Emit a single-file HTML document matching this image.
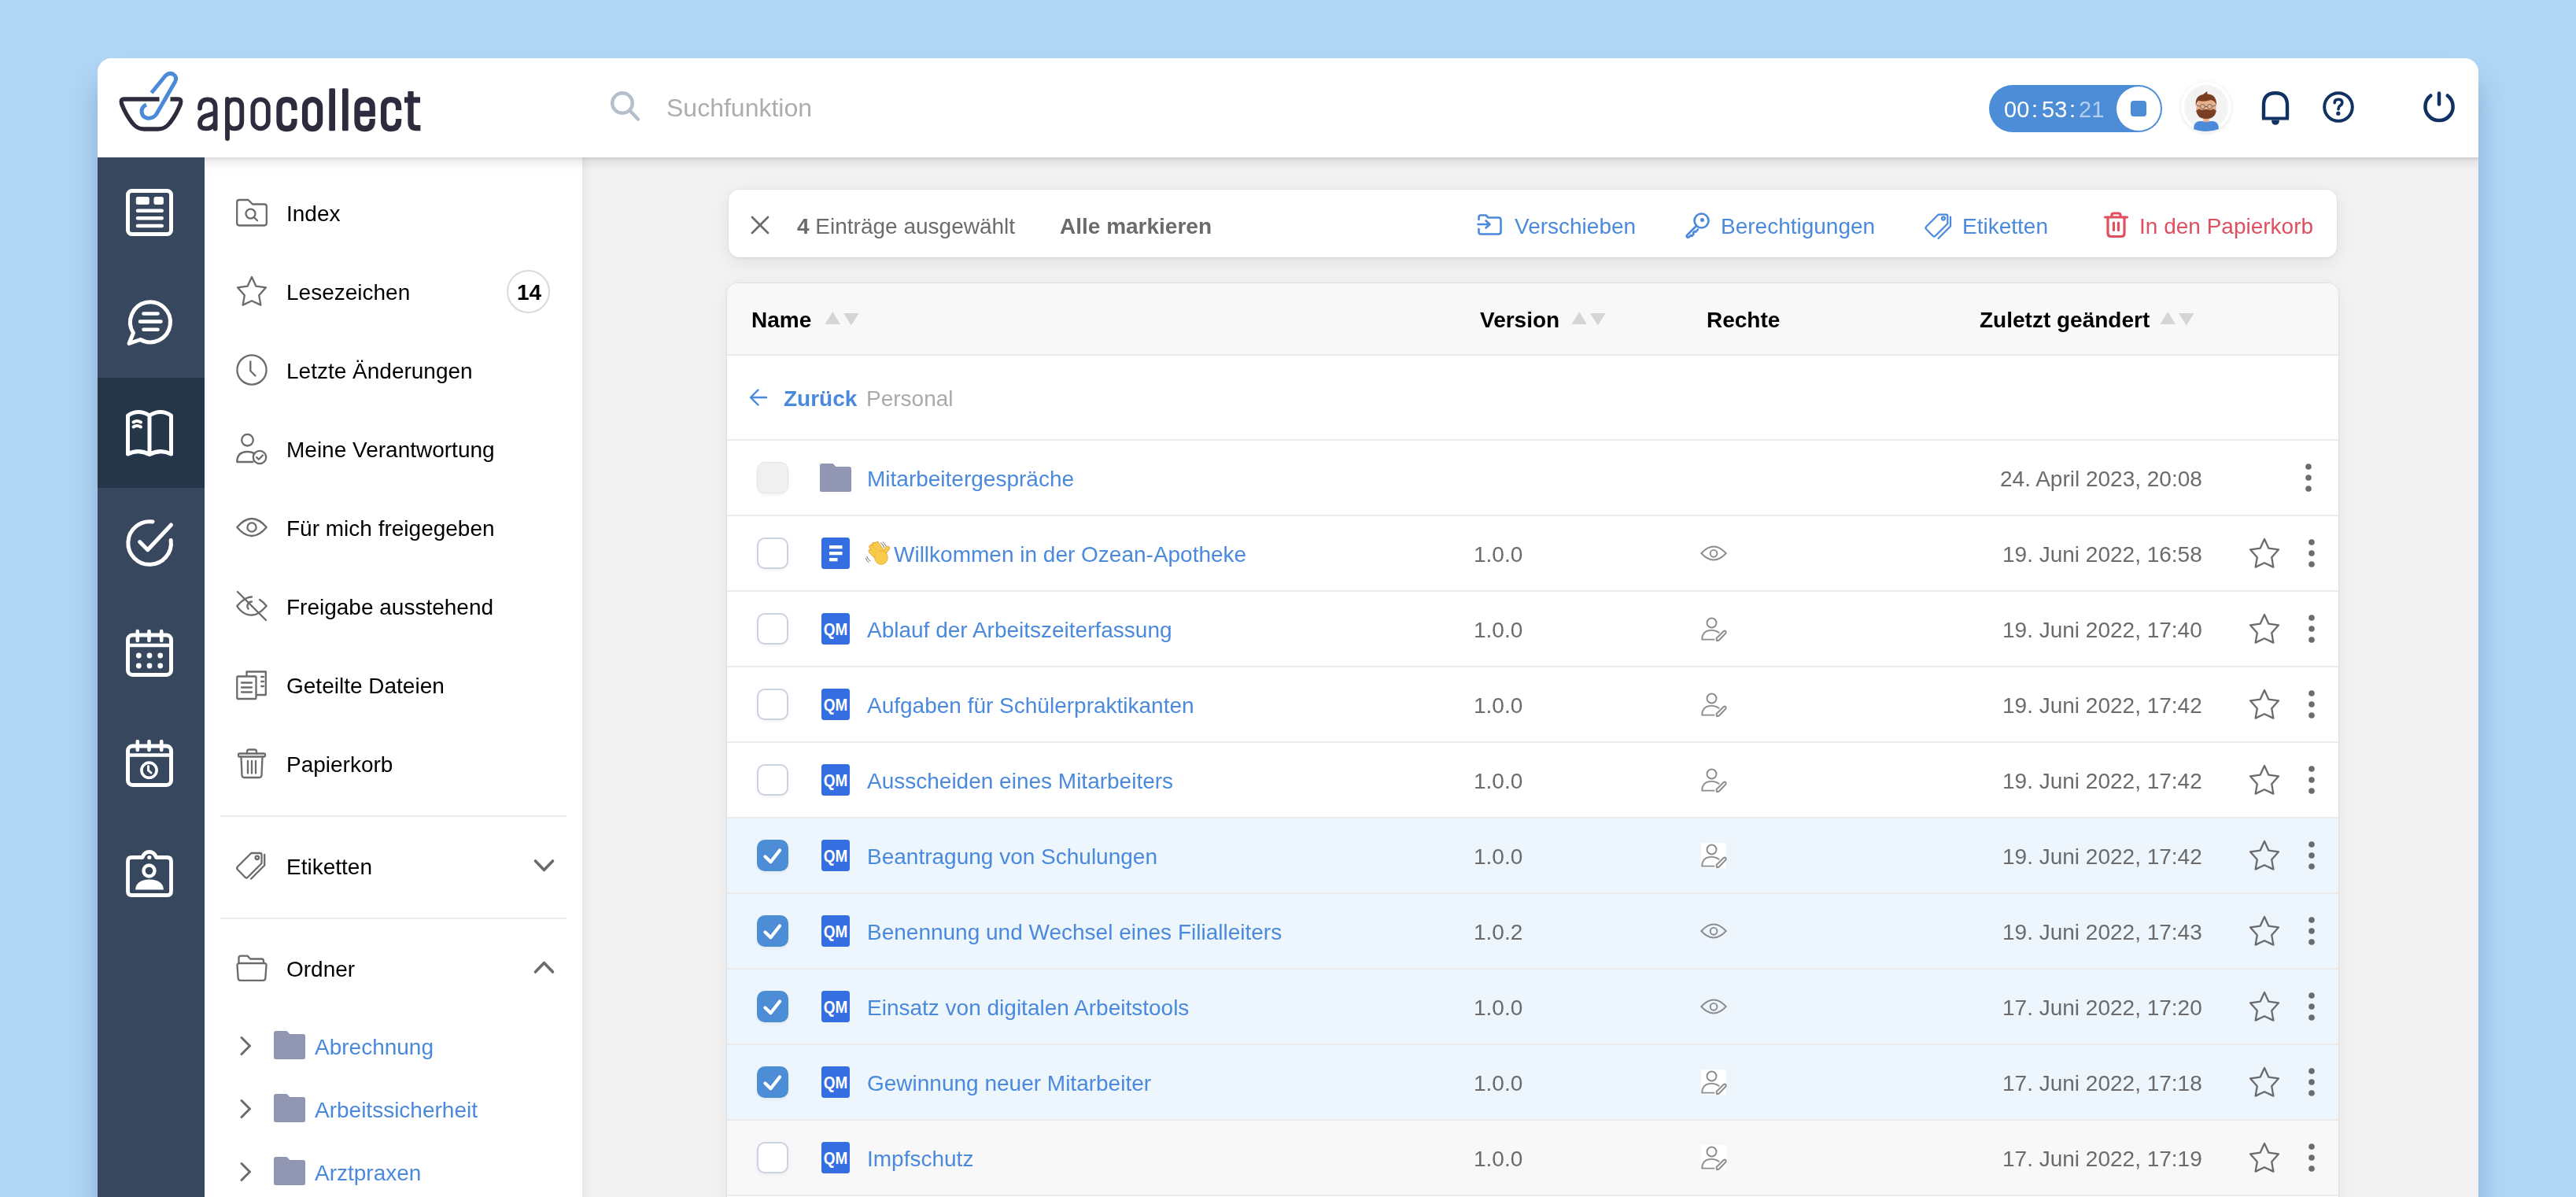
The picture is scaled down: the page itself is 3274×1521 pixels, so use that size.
<!DOCTYPE html><html><head><meta charset="utf-8"><style>
*{box-sizing:border-box}
html,body{margin:0;padding:0}
body{width:3274px;height:1521px;overflow:hidden;background:#b1d5f5;position:relative;font-family:"Liberation Sans", sans-serif}
.a{position:absolute}
.t{position:absolute;line-height:1;white-space:nowrap;will-change:transform}
.i{position:absolute;overflow:visible}
</style></head><body>
<div class="a" style="left:124px;top:74px;width:3026px;height:1600px;background:#f2f2f2;border-radius:18px 18px 0 0;box-shadow:0 30px 32px rgba(40,80,130,.30)"></div>
<div class="a" style="left:124px;top:200px;width:136px;height:1400px;background:#37485e"></div>
<div class="a" style="left:124px;top:480px;width:136px;height:140px;background:#263649"></div>
<div class="a" style="left:260px;top:200px;width:480px;height:1400px;background:#fff"></div>
<div class="a" style="left:740px;top:200px;width:12px;height:1400px;background:linear-gradient(90deg,rgba(0,0,0,.045),rgba(0,0,0,.02) 50%,rgba(0,0,0,0))"></div>
<div class="a" style="left:124px;top:74px;width:3026px;height:126px;background:#fff;border-radius:18px 18px 0 0"></div>
<div class="a" style="left:260px;top:200px;width:2890px;height:20px;background:linear-gradient(180deg,rgba(0,0,0,.14),rgba(0,0,0,.06) 25%,rgba(0,0,0,.015) 65%,rgba(0,0,0,0))"></div>
<svg class="i" style="left:0px;top:0px;" width="600" height="200" viewBox="0 0 600 200">
<path d="M202.5 126 H158 Q152.6 126 154.6 132 Q160 146 168 156 Q174 164 183 164 H201 Q210 164 216 156 Q224 146 229.4 132 Q231.4 126 226 126 H216.5" fill="none" stroke="#2d2b3d" stroke-width="5.3" stroke-linejoin="round" stroke-linecap="butt"/>
<path d="M192.5 118 L210 96.5 Q215 91.5 220.5 94.5 Q225.5 98 222.5 104 L198.5 145.5 Q194 151 187 150 Q180 148.5 180 141 Q180.5 135.5 186 133" fill="none" stroke="#4a8ad8" stroke-width="5" stroke-linecap="butt" stroke-linejoin="round"/>
<g fill="none" stroke="#2d2b3d" stroke-width="5.8" stroke-linecap="butt">
<path d="M254 137.5 Q254 126.4 263.8 126.4 Q273.6 126.4 273.6 137 V163.5" stroke-linecap="round"/>
<path d="M273.6 143.5 L261 147.5 Q254 150.5 254 157 Q254 163.4 262 163.4 Q270 163.4 273.6 156"/>
<path d="M289 126 V176" stroke-linecap="round"/>
<path d="M289 134 Q291 126.4 298 126.4 Q307.3 126.4 307.3 136 V154 Q307.3 163.4 298 163.4 Q291 163.4 289 156"/>
<rect x="321.4" y="126.4" width="19.4" height="37" rx="9.7"/>
</g>
<g fill="none" stroke="#2d2b3d" stroke-width="7.3" stroke-linecap="butt">
<path d="M374 140 V136.5 Q374 126.6 364.5 126.6 Q355 126.6 355 136.5 V153.5 Q355 163.5 364.5 163.5 Q374 163.5 374 153.5 V151"/>
<rect x="387.6" y="126.6" width="19" height="37" rx="9.5"/>
<path d="M454 144.5 H473.2 V136.5 Q473.2 126.6 463.6 126.6 Q454 126.6 454 136.5 V153.5 Q454 163.5 463.6 163.5 Q473.2 163.5 473.2 153.5 V151"/>
<path d="M506.6 140 V136.5 Q506.6 126.6 497 126.6 Q487.6 126.6 487.6 136.5 V153.5 Q487.6 163.5 497 163.5 Q506.6 163.5 506.6 153.5 V151"/>
<path d="M522 116 V155 Q522 162.6 529 162.6 H534.4"/>
<path d="M514 127 H534"/>
</g>
<rect x="418.3" y="112.3" width="7.7" height="54" rx="1.5" fill="#2d2b3d"/>
<rect x="435" y="112.3" width="7.7" height="54" rx="1.5" fill="#2d2b3d"/>
</svg>
<svg class="i" style="left:760px;top:100px;" width="70" height="70" viewBox="0 0 70 70"><circle cx="31" cy="31" r="12.8" fill="none" stroke="#b5bfcc" stroke-width="4.4"/><path d="M40.5 40.5 L51 51.5" stroke="#b5bfcc" stroke-width="4.4" stroke-linecap="round"/></svg>
<div class="t" style="left:847px;top:121.2px;font-size:32px;color:#adadad;font-weight:400;">Suchfunktion</div>
<div class="a" style="left:2528px;top:108px;width:220px;height:60px;border-radius:30px;background:#4d8dd7"></div>
<div class="a" style="left:2689px;top:109px;width:58px;height:58px;border-radius:50%;background:#fff;border:1.5px solid #4d8dd7"></div>
<div class="a" style="left:2708px;top:128px;width:20px;height:20px;border-radius:4px;background:#4d8dd7"></div>
<div class="t" style="left:2546.5px;top:124.9px;font-size:29px;color:#fff;font-weight:400;">00</div>
<div class="t" style="left:2582px;top:124.9px;font-size:29px;color:#fff;font-weight:400;">:</div>
<div class="t" style="left:2595px;top:124.9px;font-size:29px;color:#fff;font-weight:400;">53</div>
<div class="t" style="left:2630px;top:124.9px;font-size:29px;color:#fff;font-weight:400;">:</div>
<div class="t" style="left:2642px;top:124.9px;font-size:29px;color:#b3cff0;font-weight:400;">21</div>
<div class="a" style="left:2772px;top:104px;width:64px;height:64px;border-radius:50%;background:#f3f3f3;border:4px solid #fff;box-shadow:0 1px 4px rgba(0,0,0,.12)"></div>
<svg class="i" style="left:2772px;top:104px;" width="64" height="64" viewBox="0 0 64 64">
<path d="M16 60 Q16 51 23 50 L41 50 Q48 51 48 60 Q32 66 16 60Z" fill="#4a8ad8"/>
<rect x="28.5" y="42" width="7" height="9" fill="#eab089"/>
<ellipse cx="32" cy="33" rx="12.5" ry="14" fill="#eab089"/>
<path d="M19 33 Q19 47 32 47 Q45 47 45 33 L45 38 Q42 32 38 36 Q32 34 26 36 Q22 32 19 38Z" fill="#7a3e22"/>
<path d="M19 31 Q17 18 28 16 L33 12 L33.5 15.5 Q46 16 45 31 Q44 24 38 23 Q30 26 22 24 Q19 27 19 31Z" fill="#7a3e22"/>
<circle cx="27.5" cy="31.5" r="3" fill="none" stroke="#666" stroke-width="1"/><circle cx="36.5" cy="31.5" r="3" fill="none" stroke="#666" stroke-width="1"/>
<path d="M30.5 31.5 H33.5 M20 30 L24.5 31 M44 30 L39.5 31" stroke="#666" stroke-width="1"/>
</svg>
<svg class="i" style="left:2860px;top:100px;" width="60" height="70" viewBox="0 0 60 70"><path d="M17 50.5 V33.5 Q17 18.2 32 18.2 Q47 18.2 47 33.5 V50.5" fill="none" stroke="#0f3263" stroke-width="4.4"/><path d="M15 50.5 H49" stroke="#0f3263" stroke-width="4"/><path d="M27 52.5 Q27 58.7 32 58.7 Q37 58.7 37 52.5Z" fill="#0f3263"/></svg>
<svg class="i" style="left:2940px;top:100px;" width="64" height="70" viewBox="0 0 64 70"><circle cx="32" cy="36" r="17.8" fill="none" stroke="#0f3263" stroke-width="4"/><path d="M27.2 30.8 Q27.2 26.2 32 26.2 Q36.8 26.2 36.8 30.3 Q36.8 33 33.6 34.8 Q32 35.8 32 38.8" fill="none" stroke="#0f3263" stroke-width="3.6" stroke-linecap="round"/><circle cx="31.8" cy="44.2" r="2.6" fill="#0f3263"/></svg>
<svg class="i" style="left:3070px;top:100px;" width="64" height="70" viewBox="0 0 64 70"><path d="M19.3 21.5 A17.6 17.6 0 1 0 40.7 21.5" fill="none" stroke="#0f3263" stroke-width="4.5" stroke-linecap="round"/><path d="M30 18.6 V32.6" stroke="#0f3263" stroke-width="4.5" stroke-linecap="round"/></svg>
<svg class="i" style="left:160px;top:240px;" width="60" height="60" viewBox="0 0 60 60"><rect x="2.5" y="2.5" width="55" height="55" rx="5" fill="none" stroke="#fff" stroke-width="5"/>
<rect x="12.8" y="10" width="17" height="10" rx="2.5" fill="#fff"/><rect x="35.5" y="10" width="12.4" height="10" rx="2.5" fill="#fff"/>
<path d="M15 27.8 H45.7 M15 37.3 H45.7 M15 47 H45.7" stroke="#fff" stroke-width="4.6" stroke-linecap="round"/></svg>
<svg class="i" style="left:160px;top:380px;" width="60" height="60" viewBox="0 0 60 60"><path d="M9.5 43 A25.5 25.5 0 1 1 18.5 51.5 L4 56.5 Z" fill="none" stroke="#fff" stroke-width="5" stroke-linejoin="round"/>
<path d="M22.5 18.5 H40.5 M18 28.6 H44.5 M22.5 38.7 H40.5" stroke="#fff" stroke-width="4.6" stroke-linecap="round"/></svg>
<svg class="i" style="left:160px;top:520px;" width="60" height="60" viewBox="0 0 60 60"><path d="M2.5 8 Q16 -1 30 8 Q44 -1 57.5 8 V57 Q44 50 30 57.5 Q16 50 2.5 57 Z M30 8 V57.5" fill="none" stroke="#fff" stroke-width="5" stroke-linejoin="round"/>
<path d="M9.5 16.5 Q14 13.5 19 16.5 M9.5 22.5 Q14 19.5 19 22.5" fill="none" stroke="#fff" stroke-width="4" stroke-linecap="round"/></svg>
<svg class="i" style="left:160px;top:660px;" width="60" height="60" viewBox="0 0 60 60"><path d="M34 3 A27.3 27.3 0 1 0 57.2 26.5" fill="none" stroke="#fff" stroke-width="5" stroke-linecap="round"/>
<path d="M17.6 28.6 L27.7 38.7 L57.5 7" fill="none" stroke="#fff" stroke-width="5" stroke-linecap="round" stroke-linejoin="round"/></svg>
<svg class="i" style="left:160px;top:800px;" width="60" height="60" viewBox="0 0 60 60"><rect x="2.5" y="7" width="55" height="50.5" rx="6" fill="none" stroke="#fff" stroke-width="5"/>
<path d="M2.5 20 H57.5" stroke="#fff" stroke-width="4.5"/>
<path d="M14.8 2 V14 M29.5 2 V14 M45.2 2 V14" stroke="#fff" stroke-width="4.6" stroke-linecap="round"/>
<g fill="#fff"><circle cx="16.3" cy="33" r="3.4"/><circle cx="30" cy="33" r="3.4"/><circle cx="43.7" cy="33" r="3.4"/><circle cx="16.3" cy="46" r="3.4"/><circle cx="30" cy="46" r="3.4"/><circle cx="43.7" cy="46" r="3.4"/></g></svg>
<svg class="i" style="left:160px;top:940px;" width="60" height="60" viewBox="0 0 60 60"><rect x="2.5" y="8" width="55" height="49.5" rx="6" fill="none" stroke="#fff" stroke-width="5"/>
<path d="M2.5 19.5 H57.5" stroke="#fff" stroke-width="4.5"/>
<path d="M14.8 2 V13 M29.5 2 V13 M45.2 2 V13" stroke="#fff" stroke-width="4.6" stroke-linecap="round"/>
<circle cx="29.5" cy="38.7" r="9.6" fill="none" stroke="#fff" stroke-width="3.6"/><path d="M28.5 33.5 V38.8 L32 42" fill="none" stroke="#fff" stroke-width="3" stroke-linecap="round"/></svg>
<svg class="i" style="left:160px;top:1080px;" width="60" height="60" viewBox="0 0 60 60"><path d="M21 9.5 H7.5 Q2.5 9.5 2.5 14.5 V52.5 Q2.5 57.5 7.5 57.5 H52.5 Q57.5 57.5 57.5 52.5 V14.5 Q57.5 9.5 52.5 9.5 H38.5 Q36 2.5 29.8 2.5 Q23.5 2.5 21 9.5 Z" fill="none" stroke="#fff" stroke-width="4.8" stroke-linejoin="round"/>
<circle cx="29.8" cy="9.5" r="2.6" fill="#fff"/>
<circle cx="29.5" cy="26.5" r="7" fill="none" stroke="#fff" stroke-width="4.4"/>
<path d="M12 50.5 Q13 38 30 37.6 Q47 38 48 50.5 Z" fill="#fff"/></svg>
<svg class="i" style="left:300px;top:250px;" width="40" height="40" viewBox="0 0 40 40"><g fill="none" stroke="#6b6b6b" stroke-width="2.3" stroke-linecap="round" stroke-linejoin="round"><path d="M1.2 7 Q1.2 4 4.2 4 H15.5 L21 9.5 H36 Q38.8 9.5 38.8 12.3 V33.6 Q38.8 36.5 36 36.5 H4 Q1.2 36.5 1.2 33.6 Z"/><circle cx="18.5" cy="21.6" r="6"/><path d="M22.8 26 L27 30.2"/></g></svg>
<svg class="i" style="left:300px;top:350px;" width="40" height="40" viewBox="0 0 40 40"><g fill="none" stroke="#6b6b6b" stroke-width="2.3" stroke-linecap="round" stroke-linejoin="round"><path d="M20 2 L25.3 13.6 L38 15.3 L29.2 25.3 L31.4 37.6 L20 32.2 L8.6 37.6 L10.8 25.3 L2 15.3 L14.7 13.6 Z"/></g></svg>
<svg class="i" style="left:300px;top:450px;" width="40" height="40" viewBox="0 0 40 40"><g fill="none" stroke="#6b6b6b" stroke-width="2.3" stroke-linecap="round" stroke-linejoin="round"><circle cx="20" cy="20" r="18.6"/><path d="M18.3 9.5 V21.2 L24.5 27.5"/></g></svg>
<svg class="i" style="left:300px;top:550px;" width="40" height="40" viewBox="0 0 40 40"><g fill="none" stroke="#6b6b6b" stroke-width="2.3" stroke-linecap="round" stroke-linejoin="round"><circle cx="14.5" cy="9.2" r="7.3"/><path d="M1.3 37 Q1.3 24 14.5 24 Q20 24 23.5 26.5 M1.3 37 H21.5"/><circle cx="30" cy="31" r="8.2"/><path d="M26 31 L28.8 33.8 L34 28.5"/></g></svg>
<svg class="i" style="left:300px;top:650px;" width="40" height="40" viewBox="0 0 40 40"><g fill="none" stroke="#6b6b6b" stroke-width="2.3" stroke-linecap="round" stroke-linejoin="round"><path d="M1.3 20 Q20 -2 38.7 20 Q20 42 1.3 20 Z"/><circle cx="20" cy="20" r="5.6"/></g></svg>
<svg class="i" style="left:300px;top:750px;" width="40" height="40" viewBox="0 0 40 40"><g fill="none" stroke="#6b6b6b" stroke-width="2.3" stroke-linecap="round" stroke-linejoin="round"><path d="M5 25 Q2.5 22.5 1.3 20 Q12 8 20 8.5 M30 12 Q35 15 38.7 20 Q28 32 20 31.5 Q12 32 5 25"/><path d="M20 14.5 A5.6 5.6 0 0 0 15.6 23.5"/><path d="M2 2 L38 38"/></g></svg>
<svg class="i" style="left:300px;top:850px;" width="40" height="40" viewBox="0 0 40 40"><g fill="none" stroke="#6b6b6b" stroke-width="2.3" stroke-linecap="round" stroke-linejoin="round"><path d="M13.5 8.5 V3.5 H37.8 V33 H26"/><path d="M32.2 10 H35 M32.2 16 H35 M32.2 22 H35"/><rect x="1.3" y="9.5" width="24.2" height="28.5" rx="1"/><path d="M7 17.5 H20 M7 23.5 H20 M7 29.5 H20"/></g></svg>
<svg class="i" style="left:300px;top:950px;" width="40" height="40" viewBox="0 0 40 40"><g fill="none" stroke="#6b6b6b" stroke-width="2.3" stroke-linecap="round" stroke-linejoin="round"><path d="M4 7.5 H36 Q37 7.5 37 9 V10 Q37 11.5 36 11.5 H4 Q3 11.5 3 10 V9 Q3 7.5 4 7.5Z"/><path d="M14 7.5 V5 Q14 2.5 16.5 2.5 H23.5 Q26 2.5 26 5 V7.5"/><path d="M6.5 11.5 L7.5 35 Q7.7 38 10.5 38 H29.5 Q32.3 38 32.5 35 L33.5 11.5"/><path d="M15 17 V32.5 M20 17 V32.5 M25 17 V32.5"/></g></svg>
<div class="t" style="left:364px;top:258.3px;font-size:28px;color:#000;font-weight:400;">Index</div>
<div class="t" style="left:364px;top:358.3px;font-size:28px;color:#000;font-weight:400;">Lesezeichen</div>
<div class="t" style="left:364px;top:458.3px;font-size:28px;color:#000;font-weight:400;">Letzte Änderungen</div>
<div class="t" style="left:364px;top:558.3px;font-size:28px;color:#000;font-weight:400;">Meine Verantwortung</div>
<div class="t" style="left:364px;top:658.3px;font-size:28px;color:#000;font-weight:400;">Für mich freigegeben</div>
<div class="t" style="left:364px;top:758.3px;font-size:28px;color:#000;font-weight:400;">Freigabe ausstehend</div>
<div class="t" style="left:364px;top:858.3px;font-size:28px;color:#000;font-weight:400;">Geteilte Dateien</div>
<div class="t" style="left:364px;top:958.3px;font-size:28px;color:#000;font-weight:400;">Papierkorb</div>
<div class="a" style="left:644px;top:342.5px;width:55px;height:55px;border-radius:50%;border:2px solid #dadada;background:#fff"></div>
<div class="t" style="left:656.5px;top:358.3px;font-size:28px;color:#000;font-weight:700;">14</div>
<div class="a" style="left:280px;top:1036px;width:440px;height:2px;background:#ebebeb"></div>
<div class="a" style="left:280px;top:1166px;width:440px;height:2px;background:#ebebeb"></div>
<svg class="i" style="left:300px;top:1080px;" width="40" height="40" viewBox="0 0 40 40"><g fill="none" stroke="#6b6b6b" stroke-width="2.3" stroke-linecap="round" stroke-linejoin="round"><path d="M2 21.3 L19.3 4 H30.5 Q32.5 4 32.5 6 V17 L14.8 34.7 Q13.2 36.3 11.6 34.7 L2 25 Q0.3 23 2 21.3 Z"/><circle cx="26.8" cy="9.8" r="2.2"/><path d="M36.2 6 V19.5 L19 36.7"/></g></svg>
<div class="t" style="left:364px;top:1088.3px;font-size:28px;color:#000;font-weight:400;">Etiketten</div>
<svg class="i" style="left:300px;top:1210px;" width="40" height="40" viewBox="0 0 40 40"><g fill="none" stroke="#6b6b6b" stroke-width="2.3" stroke-linecap="round" stroke-linejoin="round"><path d="M3.5 14 V7.2 Q3.5 4.6 6 4.6 H14.5 L18 8.5 H32.5 Q35 8.5 35 11 V14"/><path d="M1.5 16.8 Q1.4 14 4.3 14 H35.8 Q38.7 14 38.5 16.8 L37.3 33.2 Q37.1 35.9 34.4 35.9 H5.6 Q2.9 35.9 2.7 33.2 Z"/></g></svg>
<div class="t" style="left:364px;top:1218.0px;font-size:28px;color:#000;font-weight:400;">Ordner</div>
<svg class="i" style="left:672px;top:1085px;" width="40" height="30" viewBox="0 0 40 30"><path d="M8.5 9 L19.5 20.5 L30.5 9" fill="none" stroke="#6b6b6b" stroke-width="3.6" stroke-linecap="round" stroke-linejoin="round"/></svg>
<svg class="i" style="left:672px;top:1214px;" width="40" height="30" viewBox="0 0 40 30"><path d="M8.5 21 L19.5 9.5 L30.5 21" fill="none" stroke="#6b6b6b" stroke-width="3.6" stroke-linecap="round" stroke-linejoin="round"/></svg>
<svg class="i" style="left:300px;top:1314px;" width="24" height="30" viewBox="0 0 24 30"><path d="M7 4.5 L17.5 15 L7 25.5" fill="none" stroke="#6b6b6b" stroke-width="3" stroke-linecap="round" stroke-linejoin="round"/></svg>
<svg class="i" style="left:348px;top:1310px;" width="40" height="36" viewBox="0 0 40 36"><path d="M0 2.5 Q0 0 2.5 0 H16.5 L20.5 4 H37.5 Q40 4 40 6.5 V33.5 Q40 36 37.5 36 H2.5 Q0 36 0 33.5 Z" fill="#9197b3"/></svg>
<div class="t" style="left:400px;top:1316.7px;font-size:28px;color:#4a89dc;font-weight:400;">Abrechnung</div>
<svg class="i" style="left:300px;top:1394px;" width="24" height="30" viewBox="0 0 24 30"><path d="M7 4.5 L17.5 15 L7 25.5" fill="none" stroke="#6b6b6b" stroke-width="3" stroke-linecap="round" stroke-linejoin="round"/></svg>
<svg class="i" style="left:348px;top:1390px;" width="40" height="36" viewBox="0 0 40 36"><path d="M0 2.5 Q0 0 2.5 0 H16.5 L20.5 4 H37.5 Q40 4 40 6.5 V33.5 Q40 36 37.5 36 H2.5 Q0 36 0 33.5 Z" fill="#9197b3"/></svg>
<div class="t" style="left:400px;top:1396.7px;font-size:28px;color:#4a89dc;font-weight:400;">Arbeitssicherheit</div>
<svg class="i" style="left:300px;top:1474px;" width="24" height="30" viewBox="0 0 24 30"><path d="M7 4.5 L17.5 15 L7 25.5" fill="none" stroke="#6b6b6b" stroke-width="3" stroke-linecap="round" stroke-linejoin="round"/></svg>
<svg class="i" style="left:348px;top:1470px;" width="40" height="36" viewBox="0 0 40 36"><path d="M0 2.5 Q0 0 2.5 0 H16.5 L20.5 4 H37.5 Q40 4 40 6.5 V33.5 Q40 36 37.5 36 H2.5 Q0 36 0 33.5 Z" fill="#9197b3"/></svg>
<div class="t" style="left:400px;top:1476.7px;font-size:28px;color:#4a89dc;font-weight:400;">Arztpraxen</div>
<div class="a" style="left:926px;top:241px;width:2044px;height:86px;border-radius:14px;background:#fff;box-shadow:0 0 0 1px rgba(0,0,0,.025),0 1px 3px rgba(0,0,0,.06),0 6px 24px rgba(0,0,0,.08)"></div>
<svg class="i" style="left:950px;top:270px;" width="32" height="32" viewBox="0 0 32 32"><path d="M6 6 L26 26 M26 6 L6 26" stroke="#6b6b6b" stroke-width="2.7" stroke-linecap="round"/></svg>
<div class="t" style="left:1013px;top:274.1px;font-size:28px;color:#6b6b6b"><b>4</b> Einträge ausgewählt</div>
<div class="t" style="left:1347px;top:274.1px;font-size:28px;color:#6b6b6b;font-weight:700;">Alle markieren</div>
<svg class="i" style="left:1876px;top:270px;" width="34" height="30" viewBox="0 0 34 30"><g fill="none" stroke="#4a89dc" stroke-width="2.6" stroke-linecap="round" stroke-linejoin="round"><path d="M3.5 9 V6 Q3.5 3.5 6 3.5 H12.5 L15.5 6.5 H28.5 Q31.5 6.5 31.5 9.5 V24.5 Q31.5 27.5 28.5 27.5 H6 Q3.5 27.5 3.5 25 V21"/><path d="M2.5 15 H17 M12.5 10.5 L17.5 15 L12.5 19.5"/></g></svg>
<div class="t" style="left:1925px;top:274.2px;font-size:28px;color:#4a89dc;font-weight:400;">Verschieben</div>
<svg class="i" style="left:2140px;top:269px;" width="34" height="34" viewBox="0 0 34 34"><g fill="none" stroke="#4a89dc" stroke-width="2.6" stroke-linecap="round" stroke-linejoin="round"><circle cx="22.5" cy="11.5" r="9"/><circle cx="23.5" cy="10.5" r="1.2" fill="#4a89dc"/><path d="M16 18 L4 30 Q3 31.5 4.5 32.5 Q6 33 7 32 L9 30 L10.5 30.8 L12.5 28.5 L12 27 L14 25 L15.5 25.5 L18 22.5"/></g></svg>
<div class="t" style="left:2187px;top:274.2px;font-size:28px;color:#4a89dc;font-weight:400;">Berechtigungen</div>
<svg class="i" style="left:2446px;top:269px;" width="36" height="34" viewBox="0 0 36 34"><g fill="none" stroke="#4a89dc" stroke-width="2.2" stroke-linecap="round" stroke-linejoin="round"><path d="M2.2 19 L17.5 3.7 H27.5 Q29.3 3.7 29.3 5.5 V15.2 L13.5 31 Q12.2 32.3 10.9 31 L2.2 22.3 Q0.7 20.6 2.2 19 Z"/><circle cx="24" cy="8.6" r="2"/><path d="M33 6.5 V18.5 L17.5 34"/></g></svg>
<div class="t" style="left:2494px;top:274.2px;font-size:28px;color:#4a89dc;font-weight:400;">Etiketten</div>
<svg class="i" style="left:2674px;top:269px;" width="32" height="34" viewBox="0 0 32 34"><g fill="none" stroke="#e04f5f" stroke-width="3.2" stroke-linecap="round" stroke-linejoin="round"><path d="M1.5 7 H29.5"/><path d="M10 6.5 V4.5 Q10 2 12.5 2 H18.5 Q21 2 21 4.5 V6.5"/><path d="M5 7 V27.5 Q5 31.5 9 31.5 H22 Q26 31.5 26 27.5 V7"/><path d="M12.5 14 V23.5 M18.5 14 V23.5"/></g></svg>
<div class="t" style="left:2719px;top:274.2px;font-size:28px;color:#e04f5f;font-weight:400;">In den Papierkorb</div>
<div class="a" style="left:924px;top:360px;width:2048px;height:1300px;border-radius:14px 14px 0 0;background:#fff;box-shadow:0 0 0 1px rgba(0,0,0,.035),0 0 4px rgba(0,0,0,.05),0 4px 24px rgba(0,0,0,.05)"></div>
<div class="a" style="left:924px;top:360px;width:2048px;height:90px;border-radius:14px 14px 0 0;background:#f8f8f8"></div>
<div class="a" style="left:924px;top:450px;width:2048px;height:2px;background:#ebebeb"></div>
<div class="t" style="left:955px;top:393.3px;font-size:28px;color:#000;font-weight:700;">Name</div>
<svg class="i" style="left:1048px;top:396px;" width="44" height="18" viewBox="0 0 44 18"><path d="M0.4 16 L10.2 0.3 L20 16Z M24 2 H43.6 L33.8 17.6Z" fill="#d5d5d5"/></svg>
<div class="t" style="left:1881px;top:393.3px;font-size:28px;color:#000;font-weight:700;">Version</div>
<svg class="i" style="left:1996.5px;top:396px;" width="44" height="18" viewBox="0 0 44 18"><path d="M0.4 16 L10.2 0.3 L20 16Z M24 2 H43.6 L33.8 17.6Z" fill="#d5d5d5"/></svg>
<div class="t" style="left:2169px;top:393.3px;font-size:28px;color:#000;font-weight:700;">Rechte</div>
<div class="t" style="left:2516px;top:393.3px;font-size:28px;color:#000;font-weight:700;">Zuletzt geändert</div>
<svg class="i" style="left:2744.5px;top:396px;" width="44" height="18" viewBox="0 0 44 18"><path d="M0.4 16 L10.2 0.3 L20 16Z M24 2 H43.6 L33.8 17.6Z" fill="#d5d5d5"/></svg>
<svg class="i" style="left:950px;top:490px;" width="30" height="30" viewBox="0 0 30 30"><path d="M24 15 H4.5 M13.5 5.5 L4 15 L13.5 24.5" fill="none" stroke="#4a89dc" stroke-width="2.4" stroke-linecap="round" stroke-linejoin="round"/></svg>
<div class="t" style="left:996px;top:493.3px;font-size:28px;color:#4a89dc;font-weight:700;">Zurück</div>
<div class="t" style="left:1101px;top:493.3px;font-size:28px;color:#aaaaaa;font-weight:400;">Personal</div>
<div class="a" style="left:924px;top:558px;width:2048px;height:2px;background:#ebebeb"></div>
<div class="a" style="left:924px;top:654px;width:2048px;height:2px;background:#ebebeb"></div>
<div class="a" style="left:962px;top:587px;width:40px;height:40px;border-radius:10px;background:#f0f0f0;border:1.5px solid #e4e4e4;box-shadow:0 2px 4px rgba(0,0,0,.05)"></div>
<svg class="i" style="left:1042px;top:589px;" width="40" height="36" viewBox="0 0 40 36"><path d="M0 2.5 Q0 0 2.5 0 H16.5 L20.5 4 H37.5 Q40 4 40 6.5 V33.5 Q40 36 37.5 36 H2.5 Q0 36 0 33.5 Z" fill="#9197b3"/></svg>
<div class="t" style="left:1102px;top:595.3px;font-size:28px;color:#4a89dc;font-weight:400;">Mitarbeitergespräche</div>
<div class="t" style="right:475px;top:595.3px;font-size:28px;color:#6b6b6b">24. April 2023, 20:08</div>
<svg class="i" style="left:2928px;top:587px;" width="12" height="40" viewBox="0 0 12 40"><g fill="#6b6b6b"><circle cx="6" cy="6" r="3.8"/><circle cx="6" cy="20" r="3.8"/><circle cx="6" cy="34" r="3.8"/></g></svg>
<div class="a" style="left:924px;top:750px;width:2048px;height:2px;background:#ebebeb"></div>
<div class="a" style="left:962px;top:683px;width:40px;height:40px;border-radius:10px;background:#fff;border:2px solid #cad3df;box-shadow:0 2px 4px rgba(0,0,0,.05)"></div>
<svg class="i" style="left:1044px;top:683px;" width="36" height="40" viewBox="0 0 36 40"><rect width="36" height="40" rx="3.5" fill="#356ee0"/><path d="M10 10 H26.5 V14.2 H10Z M10 18 H26.5 V22.2 H10Z M10 26 H20.5 V30.2 H10Z" fill="#fff"/></svg>
<svg class="i" style="left:1100px;top:688px;" width="32" height="30" viewBox="0 0 32 30"><g stroke-linecap="round" fill="none">
<path d="M6.5 12.5 L15 21 M7.2 6.8 L17 17.5 M10.6 3.8 L19 14.5 M14.8 2.8 L21.5 12.5 M28.2 8.5 L22 17" stroke="#e2a23a" stroke-width="5.6"/>
<path d="M6.5 12.5 L15 21 M7.2 6.8 L17 17.5 M10.6 3.8 L19 14.5 M14.8 2.8 L21.5 12.5 M28.2 8.5 L22 17" stroke="#f9cb4a" stroke-width="4"/>
<path d="M19.5 1.8 Q22.5 3.5 23.5 7.5 M22 0.6 Q25 2.5 26 6 M1.8 19.5 Q3 23 6 25 M0.4 21.5 Q1.5 25 4 26.5" stroke="#555" stroke-width="0.9"/></g>
<ellipse cx="20" cy="20.5" rx="8.3" ry="8.8" fill="#f9cb4a" stroke="#e2a23a" stroke-width="0.8"/>
<path d="M14 17 L19 22 M16.5 14 L21 19" stroke="#f9cb4a" stroke-width="4" stroke-linecap="round"/></svg>
<div class="t" style="left:1136px;top:691.3px;font-size:28px;color:#4a89dc;font-weight:400;">Willkommen in der Ozean-Apotheke</div>
<div class="t" style="left:1873px;top:691.3px;font-size:28px;color:#6b6b6b;font-weight:400;">1.0.0</div>
<svg class="i" style="left:2160px;top:689px;" width="36" height="28" viewBox="0 0 36 28"><g fill="none" stroke="#8c8c8c" stroke-width="1.9"><path d="M2.3 14 Q18 -3 33.7 14 Q18 31 2.3 14Z"/><circle cx="18" cy="14.3" r="4.4"/></g></svg>
<div class="t" style="right:475px;top:691.3px;font-size:28px;color:#6b6b6b">19. Juni 2022, 16:58</div>
<svg class="i" style="left:2858px;top:683px;" width="40" height="40" viewBox="0 0 40 40"><path d="M20 2 L25.3 13.6 L38 15.3 L29.2 25.3 L31.4 37.6 L20 32.2 L8.6 37.6 L10.8 25.3 L2 15.3 L14.7 13.6 Z" fill="none" stroke="#6b6b6b" stroke-width="2.3" stroke-linejoin="round"/></svg>
<svg class="i" style="left:2932px;top:683px;" width="12" height="40" viewBox="0 0 12 40"><g fill="#6b6b6b"><circle cx="6" cy="6" r="3.8"/><circle cx="6" cy="20" r="3.8"/><circle cx="6" cy="34" r="3.8"/></g></svg>
<div class="a" style="left:924px;top:846px;width:2048px;height:2px;background:#ebebeb"></div>
<div class="a" style="left:962px;top:779px;width:40px;height:40px;border-radius:10px;background:#fff;border:2px solid #cad3df;box-shadow:0 2px 4px rgba(0,0,0,.05)"></div>
<svg class="i" style="left:1044px;top:779px;" width="36" height="40" viewBox="0 0 36 40"><rect width="36" height="40" rx="3.5" fill="#356ee0"/><text x="2.8" y="28.2" font-family="Liberation Sans" font-weight="700" font-size="22.5" fill="#fff" textLength="30.5" lengthAdjust="spacingAndGlyphs">QM</text></svg>
<div class="t" style="left:1102px;top:787.3px;font-size:28px;color:#4a89dc;font-weight:400;">Ablauf der Arbeitszeiterfassung</div>
<div class="t" style="left:1873px;top:787.3px;font-size:28px;color:#6b6b6b;font-weight:400;">1.0.0</div>
<div class="a" style="left:2162px;top:783px;width:32px;height:32px;background:#fff"></div>
<svg class="i" style="left:2160px;top:784px;" width="36" height="32" viewBox="0 0 36 32"><g fill="none" stroke="#8c8c8c" stroke-width="1.9" stroke-linecap="round" stroke-linejoin="round"><circle cx="15.5" cy="7.5" r="6"/><path d="M24.5 19.8 Q21 16.9 15.5 16.9 Q3.5 16.9 3.2 28.6 H18.6"/><path d="M22 30.3 L21.6 27 L30.5 18.2 Q32.2 16.8 33.3 18.2 Q34.4 19.5 33 21 L24.7 29.5 Z"/></g></svg>
<div class="t" style="right:475px;top:787.3px;font-size:28px;color:#6b6b6b">19. Juni 2022, 17:40</div>
<svg class="i" style="left:2858px;top:779px;" width="40" height="40" viewBox="0 0 40 40"><path d="M20 2 L25.3 13.6 L38 15.3 L29.2 25.3 L31.4 37.6 L20 32.2 L8.6 37.6 L10.8 25.3 L2 15.3 L14.7 13.6 Z" fill="none" stroke="#6b6b6b" stroke-width="2.3" stroke-linejoin="round"/></svg>
<svg class="i" style="left:2932px;top:779px;" width="12" height="40" viewBox="0 0 12 40"><g fill="#6b6b6b"><circle cx="6" cy="6" r="3.8"/><circle cx="6" cy="20" r="3.8"/><circle cx="6" cy="34" r="3.8"/></g></svg>
<div class="a" style="left:924px;top:942px;width:2048px;height:2px;background:#ebebeb"></div>
<div class="a" style="left:962px;top:875px;width:40px;height:40px;border-radius:10px;background:#fff;border:2px solid #cad3df;box-shadow:0 2px 4px rgba(0,0,0,.05)"></div>
<svg class="i" style="left:1044px;top:875px;" width="36" height="40" viewBox="0 0 36 40"><rect width="36" height="40" rx="3.5" fill="#356ee0"/><text x="2.8" y="28.2" font-family="Liberation Sans" font-weight="700" font-size="22.5" fill="#fff" textLength="30.5" lengthAdjust="spacingAndGlyphs">QM</text></svg>
<div class="t" style="left:1102px;top:883.3px;font-size:28px;color:#4a89dc;font-weight:400;">Aufgaben für Schülerpraktikanten</div>
<div class="t" style="left:1873px;top:883.3px;font-size:28px;color:#6b6b6b;font-weight:400;">1.0.0</div>
<div class="a" style="left:2162px;top:879px;width:32px;height:32px;background:#fff"></div>
<svg class="i" style="left:2160px;top:880px;" width="36" height="32" viewBox="0 0 36 32"><g fill="none" stroke="#8c8c8c" stroke-width="1.9" stroke-linecap="round" stroke-linejoin="round"><circle cx="15.5" cy="7.5" r="6"/><path d="M24.5 19.8 Q21 16.9 15.5 16.9 Q3.5 16.9 3.2 28.6 H18.6"/><path d="M22 30.3 L21.6 27 L30.5 18.2 Q32.2 16.8 33.3 18.2 Q34.4 19.5 33 21 L24.7 29.5 Z"/></g></svg>
<div class="t" style="right:475px;top:883.3px;font-size:28px;color:#6b6b6b">19. Juni 2022, 17:42</div>
<svg class="i" style="left:2858px;top:875px;" width="40" height="40" viewBox="0 0 40 40"><path d="M20 2 L25.3 13.6 L38 15.3 L29.2 25.3 L31.4 37.6 L20 32.2 L8.6 37.6 L10.8 25.3 L2 15.3 L14.7 13.6 Z" fill="none" stroke="#6b6b6b" stroke-width="2.3" stroke-linejoin="round"/></svg>
<svg class="i" style="left:2932px;top:875px;" width="12" height="40" viewBox="0 0 12 40"><g fill="#6b6b6b"><circle cx="6" cy="6" r="3.8"/><circle cx="6" cy="20" r="3.8"/><circle cx="6" cy="34" r="3.8"/></g></svg>
<div class="a" style="left:924px;top:1038px;width:2048px;height:2px;background:#ebebeb"></div>
<div class="a" style="left:962px;top:971px;width:40px;height:40px;border-radius:10px;background:#fff;border:2px solid #cad3df;box-shadow:0 2px 4px rgba(0,0,0,.05)"></div>
<svg class="i" style="left:1044px;top:971px;" width="36" height="40" viewBox="0 0 36 40"><rect width="36" height="40" rx="3.5" fill="#356ee0"/><text x="2.8" y="28.2" font-family="Liberation Sans" font-weight="700" font-size="22.5" fill="#fff" textLength="30.5" lengthAdjust="spacingAndGlyphs">QM</text></svg>
<div class="t" style="left:1102px;top:979.3px;font-size:28px;color:#4a89dc;font-weight:400;">Ausscheiden eines Mitarbeiters</div>
<div class="t" style="left:1873px;top:979.3px;font-size:28px;color:#6b6b6b;font-weight:400;">1.0.0</div>
<div class="a" style="left:2162px;top:975px;width:32px;height:32px;background:#fff"></div>
<svg class="i" style="left:2160px;top:976px;" width="36" height="32" viewBox="0 0 36 32"><g fill="none" stroke="#8c8c8c" stroke-width="1.9" stroke-linecap="round" stroke-linejoin="round"><circle cx="15.5" cy="7.5" r="6"/><path d="M24.5 19.8 Q21 16.9 15.5 16.9 Q3.5 16.9 3.2 28.6 H18.6"/><path d="M22 30.3 L21.6 27 L30.5 18.2 Q32.2 16.8 33.3 18.2 Q34.4 19.5 33 21 L24.7 29.5 Z"/></g></svg>
<div class="t" style="right:475px;top:979.3px;font-size:28px;color:#6b6b6b">19. Juni 2022, 17:42</div>
<svg class="i" style="left:2858px;top:971px;" width="40" height="40" viewBox="0 0 40 40"><path d="M20 2 L25.3 13.6 L38 15.3 L29.2 25.3 L31.4 37.6 L20 32.2 L8.6 37.6 L10.8 25.3 L2 15.3 L14.7 13.6 Z" fill="none" stroke="#6b6b6b" stroke-width="2.3" stroke-linejoin="round"/></svg>
<svg class="i" style="left:2932px;top:971px;" width="12" height="40" viewBox="0 0 12 40"><g fill="#6b6b6b"><circle cx="6" cy="6" r="3.8"/><circle cx="6" cy="20" r="3.8"/><circle cx="6" cy="34" r="3.8"/></g></svg>
<div class="a" style="left:924px;top:1040px;width:2048px;height:94px;background:#edf5fd"></div>
<div class="a" style="left:924px;top:1134px;width:2048px;height:2px;background:#ebebeb"></div>
<div class="a" style="left:962px;top:1067px;width:40px;height:40px;border-radius:10px;background:#4d8dd6;box-shadow:0 2px 4px rgba(0,0,0,.06)"></div>
<svg class="i" style="left:962px;top:1067px;" width="40" height="40" viewBox="0 0 40 40"><path d="M10.5 21.5 L17.5 28.3 L29 13.5" fill="none" stroke="#fff" stroke-width="4.2" stroke-linecap="round" stroke-linejoin="round"/></svg>
<svg class="i" style="left:1044px;top:1067px;" width="36" height="40" viewBox="0 0 36 40"><rect width="36" height="40" rx="3.5" fill="#356ee0"/><text x="2.8" y="28.2" font-family="Liberation Sans" font-weight="700" font-size="22.5" fill="#fff" textLength="30.5" lengthAdjust="spacingAndGlyphs">QM</text></svg>
<div class="t" style="left:1102px;top:1075.3px;font-size:28px;color:#4a89dc;font-weight:400;">Beantragung von Schulungen</div>
<div class="t" style="left:1873px;top:1075.3px;font-size:28px;color:#6b6b6b;font-weight:400;">1.0.0</div>
<div class="a" style="left:2162px;top:1071px;width:32px;height:32px;background:#fff"></div>
<svg class="i" style="left:2160px;top:1072px;" width="36" height="32" viewBox="0 0 36 32"><g fill="none" stroke="#8c8c8c" stroke-width="1.9" stroke-linecap="round" stroke-linejoin="round"><circle cx="15.5" cy="7.5" r="6"/><path d="M24.5 19.8 Q21 16.9 15.5 16.9 Q3.5 16.9 3.2 28.6 H18.6"/><path d="M22 30.3 L21.6 27 L30.5 18.2 Q32.2 16.8 33.3 18.2 Q34.4 19.5 33 21 L24.7 29.5 Z"/></g></svg>
<div class="t" style="right:475px;top:1075.3px;font-size:28px;color:#6b6b6b">19. Juni 2022, 17:42</div>
<svg class="i" style="left:2858px;top:1067px;" width="40" height="40" viewBox="0 0 40 40"><path d="M20 2 L25.3 13.6 L38 15.3 L29.2 25.3 L31.4 37.6 L20 32.2 L8.6 37.6 L10.8 25.3 L2 15.3 L14.7 13.6 Z" fill="none" stroke="#6b6b6b" stroke-width="2.3" stroke-linejoin="round"/></svg>
<svg class="i" style="left:2932px;top:1067px;" width="12" height="40" viewBox="0 0 12 40"><g fill="#6b6b6b"><circle cx="6" cy="6" r="3.8"/><circle cx="6" cy="20" r="3.8"/><circle cx="6" cy="34" r="3.8"/></g></svg>
<div class="a" style="left:924px;top:1136px;width:2048px;height:94px;background:#edf5fd"></div>
<div class="a" style="left:924px;top:1230px;width:2048px;height:2px;background:#ebebeb"></div>
<div class="a" style="left:962px;top:1163px;width:40px;height:40px;border-radius:10px;background:#4d8dd6;box-shadow:0 2px 4px rgba(0,0,0,.06)"></div>
<svg class="i" style="left:962px;top:1163px;" width="40" height="40" viewBox="0 0 40 40"><path d="M10.5 21.5 L17.5 28.3 L29 13.5" fill="none" stroke="#fff" stroke-width="4.2" stroke-linecap="round" stroke-linejoin="round"/></svg>
<svg class="i" style="left:1044px;top:1163px;" width="36" height="40" viewBox="0 0 36 40"><rect width="36" height="40" rx="3.5" fill="#356ee0"/><text x="2.8" y="28.2" font-family="Liberation Sans" font-weight="700" font-size="22.5" fill="#fff" textLength="30.5" lengthAdjust="spacingAndGlyphs">QM</text></svg>
<div class="t" style="left:1102px;top:1171.3px;font-size:28px;color:#4a89dc;font-weight:400;">Benennung und Wechsel eines Filialleiters</div>
<div class="t" style="left:1873px;top:1171.3px;font-size:28px;color:#6b6b6b;font-weight:400;">1.0.2</div>
<svg class="i" style="left:2160px;top:1169px;" width="36" height="28" viewBox="0 0 36 28"><g fill="none" stroke="#8c8c8c" stroke-width="1.9"><path d="M2.3 14 Q18 -3 33.7 14 Q18 31 2.3 14Z"/><circle cx="18" cy="14.3" r="4.4"/></g></svg>
<div class="t" style="right:475px;top:1171.3px;font-size:28px;color:#6b6b6b">19. Juni 2022, 17:43</div>
<svg class="i" style="left:2858px;top:1163px;" width="40" height="40" viewBox="0 0 40 40"><path d="M20 2 L25.3 13.6 L38 15.3 L29.2 25.3 L31.4 37.6 L20 32.2 L8.6 37.6 L10.8 25.3 L2 15.3 L14.7 13.6 Z" fill="none" stroke="#6b6b6b" stroke-width="2.3" stroke-linejoin="round"/></svg>
<svg class="i" style="left:2932px;top:1163px;" width="12" height="40" viewBox="0 0 12 40"><g fill="#6b6b6b"><circle cx="6" cy="6" r="3.8"/><circle cx="6" cy="20" r="3.8"/><circle cx="6" cy="34" r="3.8"/></g></svg>
<div class="a" style="left:924px;top:1232px;width:2048px;height:94px;background:#edf5fd"></div>
<div class="a" style="left:924px;top:1326px;width:2048px;height:2px;background:#ebebeb"></div>
<div class="a" style="left:962px;top:1259px;width:40px;height:40px;border-radius:10px;background:#4d8dd6;box-shadow:0 2px 4px rgba(0,0,0,.06)"></div>
<svg class="i" style="left:962px;top:1259px;" width="40" height="40" viewBox="0 0 40 40"><path d="M10.5 21.5 L17.5 28.3 L29 13.5" fill="none" stroke="#fff" stroke-width="4.2" stroke-linecap="round" stroke-linejoin="round"/></svg>
<svg class="i" style="left:1044px;top:1259px;" width="36" height="40" viewBox="0 0 36 40"><rect width="36" height="40" rx="3.5" fill="#356ee0"/><text x="2.8" y="28.2" font-family="Liberation Sans" font-weight="700" font-size="22.5" fill="#fff" textLength="30.5" lengthAdjust="spacingAndGlyphs">QM</text></svg>
<div class="t" style="left:1102px;top:1267.3px;font-size:28px;color:#4a89dc;font-weight:400;">Einsatz von digitalen Arbeitstools</div>
<div class="t" style="left:1873px;top:1267.3px;font-size:28px;color:#6b6b6b;font-weight:400;">1.0.0</div>
<svg class="i" style="left:2160px;top:1265px;" width="36" height="28" viewBox="0 0 36 28"><g fill="none" stroke="#8c8c8c" stroke-width="1.9"><path d="M2.3 14 Q18 -3 33.7 14 Q18 31 2.3 14Z"/><circle cx="18" cy="14.3" r="4.4"/></g></svg>
<div class="t" style="right:475px;top:1267.3px;font-size:28px;color:#6b6b6b">17. Juni 2022, 17:20</div>
<svg class="i" style="left:2858px;top:1259px;" width="40" height="40" viewBox="0 0 40 40"><path d="M20 2 L25.3 13.6 L38 15.3 L29.2 25.3 L31.4 37.6 L20 32.2 L8.6 37.6 L10.8 25.3 L2 15.3 L14.7 13.6 Z" fill="none" stroke="#6b6b6b" stroke-width="2.3" stroke-linejoin="round"/></svg>
<svg class="i" style="left:2932px;top:1259px;" width="12" height="40" viewBox="0 0 12 40"><g fill="#6b6b6b"><circle cx="6" cy="6" r="3.8"/><circle cx="6" cy="20" r="3.8"/><circle cx="6" cy="34" r="3.8"/></g></svg>
<div class="a" style="left:924px;top:1328px;width:2048px;height:94px;background:#edf5fd"></div>
<div class="a" style="left:924px;top:1422px;width:2048px;height:2px;background:#ebebeb"></div>
<div class="a" style="left:962px;top:1355px;width:40px;height:40px;border-radius:10px;background:#4d8dd6;box-shadow:0 2px 4px rgba(0,0,0,.06)"></div>
<svg class="i" style="left:962px;top:1355px;" width="40" height="40" viewBox="0 0 40 40"><path d="M10.5 21.5 L17.5 28.3 L29 13.5" fill="none" stroke="#fff" stroke-width="4.2" stroke-linecap="round" stroke-linejoin="round"/></svg>
<svg class="i" style="left:1044px;top:1355px;" width="36" height="40" viewBox="0 0 36 40"><rect width="36" height="40" rx="3.5" fill="#356ee0"/><text x="2.8" y="28.2" font-family="Liberation Sans" font-weight="700" font-size="22.5" fill="#fff" textLength="30.5" lengthAdjust="spacingAndGlyphs">QM</text></svg>
<div class="t" style="left:1102px;top:1363.3px;font-size:28px;color:#4a89dc;font-weight:400;">Gewinnung neuer Mitarbeiter</div>
<div class="t" style="left:1873px;top:1363.3px;font-size:28px;color:#6b6b6b;font-weight:400;">1.0.0</div>
<div class="a" style="left:2162px;top:1359px;width:32px;height:32px;background:#fff"></div>
<svg class="i" style="left:2160px;top:1360px;" width="36" height="32" viewBox="0 0 36 32"><g fill="none" stroke="#8c8c8c" stroke-width="1.9" stroke-linecap="round" stroke-linejoin="round"><circle cx="15.5" cy="7.5" r="6"/><path d="M24.5 19.8 Q21 16.9 15.5 16.9 Q3.5 16.9 3.2 28.6 H18.6"/><path d="M22 30.3 L21.6 27 L30.5 18.2 Q32.2 16.8 33.3 18.2 Q34.4 19.5 33 21 L24.7 29.5 Z"/></g></svg>
<div class="t" style="right:475px;top:1363.3px;font-size:28px;color:#6b6b6b">17. Juni 2022, 17:18</div>
<svg class="i" style="left:2858px;top:1355px;" width="40" height="40" viewBox="0 0 40 40"><path d="M20 2 L25.3 13.6 L38 15.3 L29.2 25.3 L31.4 37.6 L20 32.2 L8.6 37.6 L10.8 25.3 L2 15.3 L14.7 13.6 Z" fill="none" stroke="#6b6b6b" stroke-width="2.3" stroke-linejoin="round"/></svg>
<svg class="i" style="left:2932px;top:1355px;" width="12" height="40" viewBox="0 0 12 40"><g fill="#6b6b6b"><circle cx="6" cy="6" r="3.8"/><circle cx="6" cy="20" r="3.8"/><circle cx="6" cy="34" r="3.8"/></g></svg>
<div class="a" style="left:924px;top:1424px;width:2048px;height:94px;background:#f8f8f8"></div>
<div class="a" style="left:924px;top:1518px;width:2048px;height:2px;background:#ebebeb"></div>
<div class="a" style="left:962px;top:1451px;width:40px;height:40px;border-radius:10px;background:#fff;border:2px solid #cad3df;box-shadow:0 2px 4px rgba(0,0,0,.05)"></div>
<svg class="i" style="left:1044px;top:1451px;" width="36" height="40" viewBox="0 0 36 40"><rect width="36" height="40" rx="3.5" fill="#356ee0"/><text x="2.8" y="28.2" font-family="Liberation Sans" font-weight="700" font-size="22.5" fill="#fff" textLength="30.5" lengthAdjust="spacingAndGlyphs">QM</text></svg>
<div class="t" style="left:1102px;top:1459.3px;font-size:28px;color:#4a89dc;font-weight:400;">Impfschutz</div>
<div class="t" style="left:1873px;top:1459.3px;font-size:28px;color:#6b6b6b;font-weight:400;">1.0.0</div>
<div class="a" style="left:2162px;top:1455px;width:32px;height:32px;background:#fff"></div>
<svg class="i" style="left:2160px;top:1456px;" width="36" height="32" viewBox="0 0 36 32"><g fill="none" stroke="#8c8c8c" stroke-width="1.9" stroke-linecap="round" stroke-linejoin="round"><circle cx="15.5" cy="7.5" r="6"/><path d="M24.5 19.8 Q21 16.9 15.5 16.9 Q3.5 16.9 3.2 28.6 H18.6"/><path d="M22 30.3 L21.6 27 L30.5 18.2 Q32.2 16.8 33.3 18.2 Q34.4 19.5 33 21 L24.7 29.5 Z"/></g></svg>
<div class="t" style="right:475px;top:1459.3px;font-size:28px;color:#6b6b6b">17. Juni 2022, 17:19</div>
<svg class="i" style="left:2858px;top:1451px;" width="40" height="40" viewBox="0 0 40 40"><path d="M20 2 L25.3 13.6 L38 15.3 L29.2 25.3 L31.4 37.6 L20 32.2 L8.6 37.6 L10.8 25.3 L2 15.3 L14.7 13.6 Z" fill="none" stroke="#6b6b6b" stroke-width="2.3" stroke-linejoin="round"/></svg>
<svg class="i" style="left:2932px;top:1451px;" width="12" height="40" viewBox="0 0 12 40"><g fill="#6b6b6b"><circle cx="6" cy="6" r="3.8"/><circle cx="6" cy="20" r="3.8"/><circle cx="6" cy="34" r="3.8"/></g></svg>
</body></html>
